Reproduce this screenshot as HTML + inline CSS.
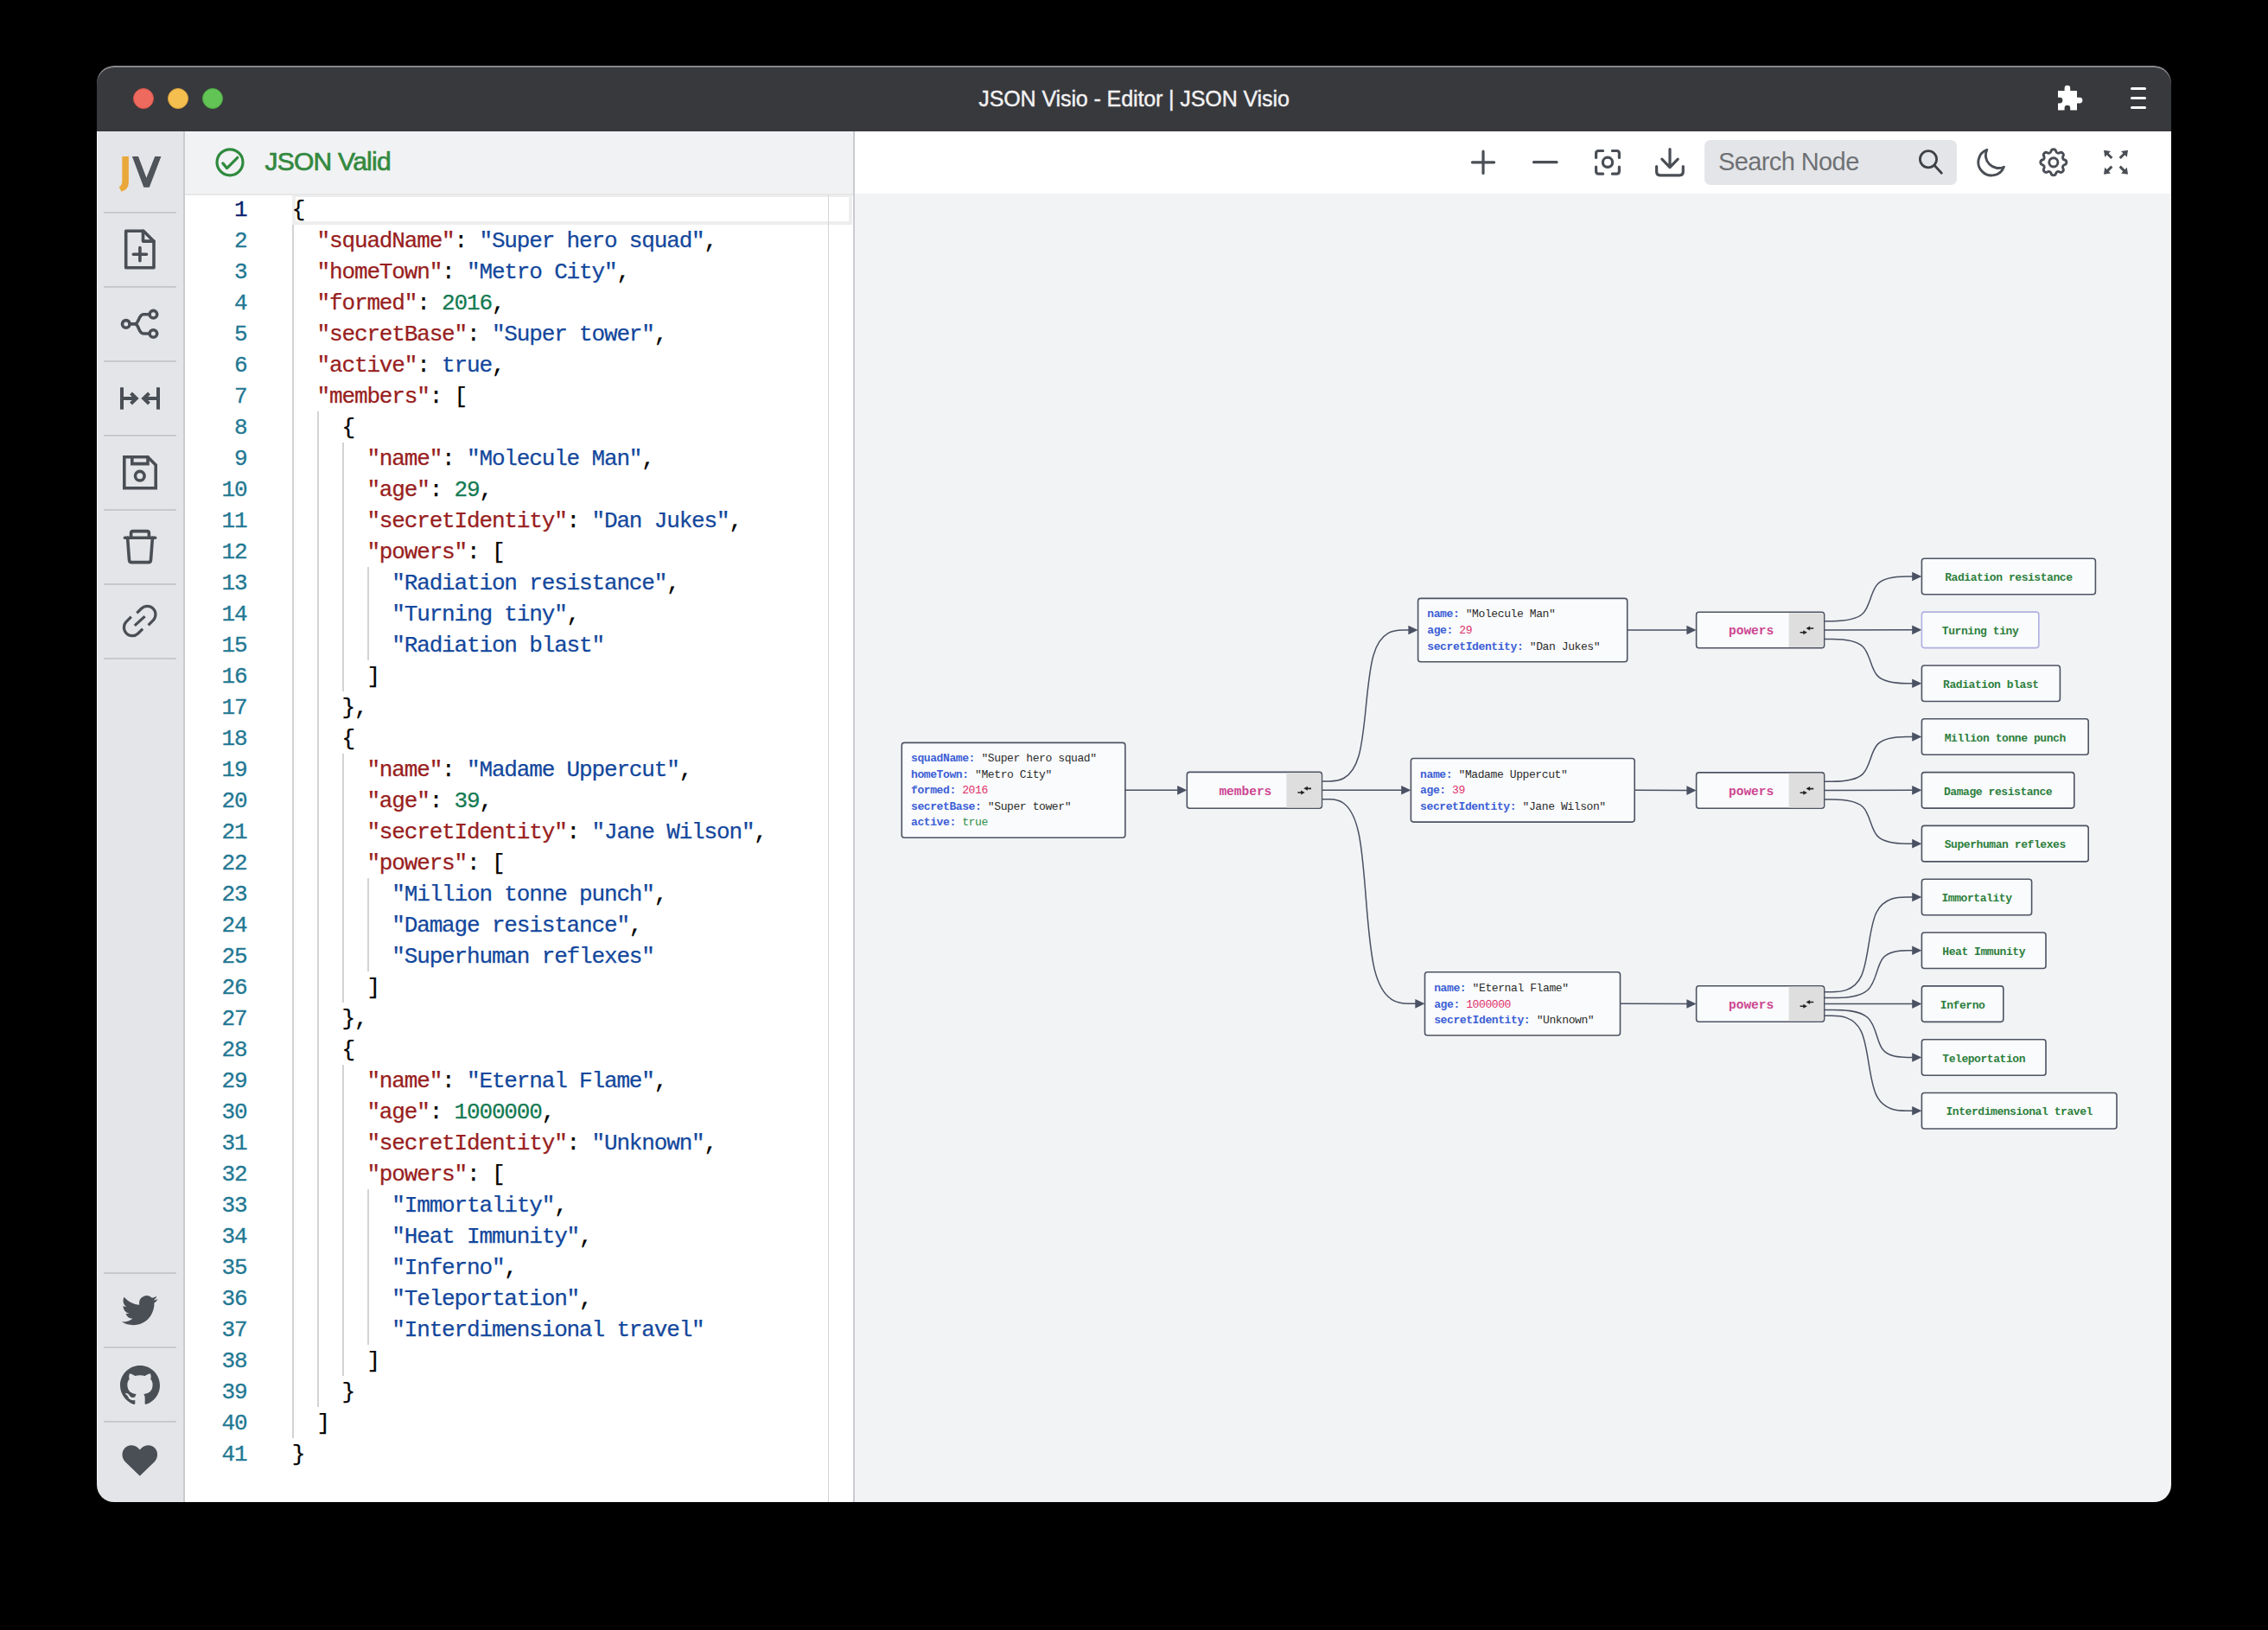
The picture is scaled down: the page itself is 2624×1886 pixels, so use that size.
<!DOCTYPE html>
<html><head><meta charset="utf-8"><title>JSON Visio - Editor | JSON Visio</title>
<style>
html,body{margin:0;padding:0}
body{width:2624px;height:1886px;background:#000;position:relative;overflow:hidden;font-family:"Liberation Sans",sans-serif}
.abs{position:absolute}
#win{position:absolute;left:0;top:0;width:2624px;height:1886px;clip-path:inset(76px 112px 148px 112px round 20px);}
.cl{position:absolute;left:0;height:36px;white-space:pre;-webkit-text-stroke:0.25px currentColor;font-family:"Liberation Mono",monospace;font-size:26px;letter-spacing:-1.153px;line-height:36px}
.ln{position:absolute;width:60px;-webkit-text-stroke:0.3px currentColor;text-align:right;font-family:"Liberation Mono",monospace;font-size:26px;letter-spacing:-1.153px;line-height:36px;color:#237893}
.k{color:#982020}.s{color:#13479c}.n{color:#137a52}.b{color:#13479c}
.g{position:absolute;width:1px;background:#d3d3d3}
.sep{position:absolute;left:120px;width:84px;height:2px;background:#c7c9cd}
.mono{font-family:"Liberation Mono",monospace}
</style></head><body>
<div id="win">

<div class="abs" style="left:112px;top:76px;width:2400px;height:76px;background:#38393d"></div>
<div class="abs" style="left:112px;top:76px;width:2400px;height:76px;border-radius:20px 20px 0 0;box-shadow:inset 0 2px 0 #88888b"></div>
<div class="abs" style="left:154px;top:102px;width:24px;height:24px;box-sizing:border-box;border-radius:50%;background:#ee6a5e;border:1px solid #d9534a"></div>
<div class="abs" style="left:194px;top:102px;width:24px;height:24px;box-sizing:border-box;border-radius:50%;background:#f5bf4f;border:1px solid #d9a23b"></div>
<div class="abs" style="left:234px;top:102px;width:24px;height:24px;box-sizing:border-box;border-radius:50%;background:#61c454;border:1px solid #4ea844"></div>
<div class="abs" style="left:1000px;top:97px;width:624px;text-align:center;font-size:25px;line-height:34px;color:#f2f2f3;-webkit-text-stroke:0.4px #f2f2f3;letter-spacing:-0.1px">JSON Visio - Editor | JSON Visio</div>
<svg class="abs" style="left:2370px;top:90px" width="50" height="50" viewBox="2370 90 50 50">
<path fill="#fff" d="M2381 105 H2388.6 V102 A3.3 3.3 0 0 1 2395.2 102 V105 H2403 V112.7 H2406 A3.4 3.4 0 0 1 2406 119.5 H2403 V127.5 H2395.2 V125 A3.3 3.3 0 0 0 2388.6 125 V127.5 H2381 V119.5 H2383 A3.4 3.4 0 0 0 2383 112.7 H2381 Z"/>
</svg>
<div class="abs" style="left:2465px;top:100.8px;width:18px;height:3.4px;border-radius:2px;background:#fff"></div>
<div class="abs" style="left:2465px;top:111.8px;width:18px;height:3.4px;border-radius:2px;background:#fff"></div>
<div class="abs" style="left:2465px;top:122.8px;width:18px;height:3.4px;border-radius:2px;background:#fff"></div>
<div class="abs" style="left:112px;top:152px;width:100px;height:1586px;background:#e4e5e8"></div>
<div class="abs" style="left:112px;top:152px;width:1px;height:1560px;background:#f3f4f6"></div>
<div class="abs" style="left:212px;top:152px;width:2px;height:1586px;background:#c9cbcf"></div>
<div class="sep" style="top:245px"></div>
<div class="sep" style="top:331px"></div>
<div class="sep" style="top:417px"></div>
<div class="sep" style="top:503px"></div>
<div class="sep" style="top:589px"></div>
<div class="sep" style="top:675px"></div>
<div class="sep" style="top:761px"></div>
<div class="sep" style="top:1472px"></div>
<div class="sep" style="top:1558px"></div>
<div class="sep" style="top:1644px"></div>
<svg class="abs" style="left:0;top:0" width="2624" height="1886" viewBox="0 0 2624 1886">
<path fill="#eaa83a" d="M141.3 181.1 H148.9 V210.5 Q148.9 219.5 140.5 221.8 L137.7 216.3 Q141.3 214.6 141.3 210 Z"/>
<path fill="#4f535a" d="M152.9 181.1 H160 L169.4 205.8 L179.2 181.1 H186.4 L172.8 216.8 H166.3 Z"/>
<g fill="none" stroke="#4a4e55" stroke-width="3.6" stroke-linejoin="round" stroke-linecap="round">
 <path d="M145.7 267.3 H166 L178 279.3 V309.7 H145.7 Z"/>
 <path d="M165.5 267.3 V279.1 H178"/>
 <path d="M154.3 294.3 H169.5 M161.9 286.6 V301.8"/>
 <circle cx="145.8" cy="374.9" r="4.3"/>
 <circle cx="177.4" cy="363.7" r="4.3"/>
 <circle cx="177.4" cy="386" r="4.3"/>
 <path d="M150.1 374.9 H156 C161 374.9 160 363.7 166 363.7 H173.1 M156 374.9 C161 374.9 160 386 166 386 H173.1"/>
 <path d="M145.8 528.8 H171 L180.2 538 V564.8 H143.8 V528.8 Z" stroke-linejoin="miter"/>
 <path d="M152.8 528.8 V536.6 H171 V528.8" stroke-linejoin="miter"/>
 <circle cx="161.8" cy="550.7" r="5.3"/>
 <path d="M144.5 622.3 H179.6"/>
 <path d="M151.6 622 V617 Q151.6 614.6 154 614.6 H170 Q172.4 614.6 172.4 617 V622"/>
 <path d="M147.6 622.3 L149.5 648 Q149.7 650.6 152.3 650.6 H171.7 Q174.3 650.6 174.5 648 L176.4 622.3"/>
</g>
<g fill="none" stroke="#4a4e55" stroke-width="4" stroke-linecap="butt" stroke-linejoin="miter">
 <path d="M141 448.3 V473.8 M183 448.3 V473.8"/>
 <path d="M143 461 H157.5 M151.5 455 L157.8 461 L151.5 467"/>
 <path d="M181 461 H166.5 M172.5 455 L166.2 461 L172.5 467"/>
</g>
<g fill="none" stroke="#4a4e55" stroke-width="3.2" stroke-linecap="butt" stroke-linejoin="round">
 <path d="M158.3 709.4 L163.7 704 A9.62 9.62 0 0 1 177.3 717.6 L171.6 723.3"/>
 <path d="M165.1 727.6 L159.7 733 A9.62 9.62 0 0 1 146.1 719.4 L151.8 713.7"/>
 <path d="M155.8 723.9 L167.6 713.1"/>
</g>
<g transform="translate(140.8 1495.2) scale(1.745)" fill="#4a4e55">
<path d="M23.953 4.57a10 10 0 01-2.825.775 4.958 4.958 0 002.163-2.723c-.951.555-2.005.959-3.127 1.184a4.92 4.92 0 00-8.384 4.482C7.69 8.095 4.067 6.13 1.64 3.162a4.822 4.822 0 00-.666 2.475c0 1.71.87 3.213 2.188 4.096a4.904 4.904 0 01-2.228-.616v.06a4.923 4.923 0 003.946 4.827 4.996 4.996 0 01-2.212.085 4.936 4.936 0 004.604 3.417 9.867 9.867 0 01-6.102 2.105c-.39 0-.779-.023-1.17-.067a13.995 13.995 0 007.557 2.209c9.053 0 13.998-7.496 13.998-13.985 0-.21 0-.42-.015-.63A9.935 9.935 0 0024 4.59z"/>
</g>
<g transform="translate(139 1579.5) scale(1.917)" fill="#4a4e55">
<path d="M12 .297c-6.63 0-12 5.373-12 12 0 5.303 3.438 9.8 8.205 11.385.6.113.82-.258.82-.577 0-.285-.01-1.04-.015-2.04-3.338.724-4.042-1.61-4.042-1.61C4.422 18.07 3.633 17.7 3.633 17.7c-1.087-.744.084-.729.084-.729 1.205.084 1.838 1.236 1.838 1.236 1.07 1.835 2.809 1.305 3.495.998.108-.776.417-1.305.76-1.605-2.665-.3-5.466-1.332-5.466-5.930 0-1.31.465-2.38 1.235-3.22-.135-.303-.54-1.523.105-3.176 0 0 1.005-.322 3.3 1.23.96-.267 1.98-.399 3-.405 1.02.006 2.04.138 3 .405 2.28-1.552 3.285-1.23 3.285-1.23.645 1.653.24 2.873.12 3.176.765.84 1.23 1.91 1.23 3.22 0 4.61-2.805 5.625-5.475 5.92.42.36.81 1.096.81 2.22 0 1.606-.015 2.896-.015 3.286 0 .315.21.69.825.57C20.565 22.092 24 17.592 24 12.297c0-6.627-5.373-12-12-12"/>
</g>
<path fill="#4a4e55" d="M161.8 1707.7 L145 1691.5 C139.5 1686 140.5 1676.8 147.5 1673.3 C153 1670.6 158.8 1673 161.8 1677.6 C164.8 1673 170.6 1670.6 176.1 1673.3 C183.1 1676.8 184.1 1686 178.6 1691.5 Z"/>
</svg>
<div class="abs" style="left:214px;top:152px;width:773px;height:72px;background:#f1f2f4"></div>
<div class="abs" style="left:214px;top:224px;width:773px;height:1514px;background:#fff"></div>
<div class="abs" style="left:987px;top:152px;width:2px;height:1586px;background:#c9cbcf"></div>
<div class="abs" style="left:989px;top:152px;width:1523px;height:72px;background:#fff"></div>
<div class="abs" style="left:989px;top:224px;width:1523px;height:1514px;background:#f2f3f5"></div>
<svg class="abs" style="left:0;top:0" width="2624" height="300" viewBox="0 0 2624 300">
<g fill="none" stroke="#2f8a3e" stroke-width="3.2" stroke-linecap="round" stroke-linejoin="round">
<circle cx="266" cy="187.8" r="15"/>
<path d="M257.8 188.9 L262.6 194.6 L274.8 182.3"/>
</g>
</svg>
<div class="abs" style="left:306.5px;top:169px;font-size:30px;letter-spacing:-0.75px;line-height:36px;color:#33893f;-webkit-text-stroke:0.7px #33893f;white-space:pre">JSON Valid</div>
<div class="abs" style="left:1972px;top:162px;width:292px;height:52px;border-radius:7px;background:#e4e5e8"></div>
<div class="abs" style="left:1988px;top:169px;font-size:29px;letter-spacing:-0.6px;line-height:36px;color:#6e7175;white-space:pre">Search Node</div>
<svg class="abs" style="left:0;top:0" width="2624" height="300" viewBox="0 0 2624 300">
<g fill="none" stroke="#4a4e55" stroke-width="3.2" stroke-linecap="round" stroke-linejoin="round">
 <path d="M1716 175.2 V200.4 M1703.4 187.8 H1728.6"/>
 <path d="M1774.5 187.7 H1801"/>
 <path d="M1846.6 182.5 V177.5 Q1846.6 174.5 1849.6 174.5 H1854.6 M1865.4 174.5 H1870.4 Q1873.4 174.5 1873.4 177.5 V182.5 M1873.4 193 V198 Q1873.4 201.2 1870.4 201.2 H1865.4 M1854.6 201.2 H1849.6 Q1846.6 201.2 1846.6 198 V193"/>
 <circle cx="1860" cy="187.8" r="5.6"/>
 <path d="M1932 172.6 V193.6 M1922.8 184.2 L1932 193.6 L1941.2 184.2"/>
 <path d="M1916.6 192.5 V198.8 Q1916.6 202.8 1920.6 202.8 H1943.3 Q1947.3 202.8 1947.3 198.8 V192.5"/>
</g>
<g fill="none" stroke="#3e4247" stroke-width="2.8" stroke-linecap="round">
 <circle cx="2231" cy="184.3" r="9.6"/>
 <path d="M2238 191.3 L2246.3 200.3"/>
</g>
<g fill="none" stroke="#4a4e55" stroke-width="2.9" stroke-linecap="round" stroke-linejoin="round">
 <path d="M2298.8 173.3 A15.3 15.3 0 1 0 2318.4 193.2 A14.9 14.9 0 0 1 2298.8 173.3 Z"/>
</g>
<g transform="translate(2355.8 167.8) scale(1.67)" fill="none" stroke="#4a4e55" stroke-width="1.75" stroke-linecap="round" stroke-linejoin="round">
 <path d="M10.325 4.317c.426 -1.756 2.924 -1.756 3.35 0a1.724 1.724 0 0 0 2.573 1.066c1.543 -.94 3.31 .826 2.37 2.37a1.724 1.724 0 0 0 1.065 2.572c1.756 .426 1.756 2.924 0 3.35a1.724 1.724 0 0 0 -1.066 2.573c.94 1.543 -.826 3.31 -2.37 2.37a1.724 1.724 0 0 0 -2.572 1.065c-.426 1.756 -2.924 1.756 -3.35 0a1.724 1.724 0 0 0 -2.573 -1.066c-1.543 .94 -3.31 -.826 -2.37 -2.37a1.724 1.724 0 0 0 -1.065 -2.572c-1.756 -.426 -1.756 -2.924 0 -3.35a1.724 1.724 0 0 0 1.066 -2.573c-.94 -1.543 .826 -3.31 2.37 -2.37c1 .608 2.296 .07 2.572 -1.065z"/>
 <circle cx="12" cy="12" r="3.05"/>
</g>
<g fill="#4a4e55" stroke="none">
 <path d="M2434 173.8 L2442 175 L2435.2 181.8 Z M2462 173.8 L2454 175 L2460.8 181.8 Z M2434 201.8 L2442 200.6 L2435.2 193.8 Z M2462 201.8 L2454 200.6 L2460.8 193.8 Z"/>
</g>
<g stroke="#4a4e55" stroke-width="3" fill="none">
 <path d="M2437.3 177 L2443.3 183 M2458.7 177 L2452.7 183 M2437.3 198.6 L2443.3 192.6 M2458.7 198.6 L2452.7 192.6"/>
</g>
</svg>
<div class="abs" style="left:958px;top:224px;width:1px;height:1514px;background:#d6d6d6;z-index:3"></div>
<div class="abs" style="left:338px;top:224px;width:640px;height:28px;border:4px solid #eeeeee;z-index:1"></div>
<div class="abs" style="left:214px;top:224px;width:773px;height:2px;background:#e6e7e9;z-index:4"></div>
<div class="ln" style="left:271.00px;top:225px;width:auto;color:#0b216f;z-index:2">1</div>
<div class="cl" style="left:337.70px;top:225px;z-index:2">{</div>
<div class="g" style="left:338.00px;top:260px;height:36px;width:2px"></div>
<div class="ln" style="left:271.00px;top:261px;width:auto;color:#237893;z-index:2">2</div>
<div class="cl" style="left:337.70px;top:261px;z-index:2">  <span class="k">&quot;squadName&quot;</span>: <span class="s">&quot;Super hero squad&quot;</span>,</div>
<div class="g" style="left:338.00px;top:296px;height:36px;width:2px"></div>
<div class="ln" style="left:271.00px;top:297px;width:auto;color:#237893;z-index:2">3</div>
<div class="cl" style="left:337.70px;top:297px;z-index:2">  <span class="k">&quot;homeTown&quot;</span>: <span class="s">&quot;Metro City&quot;</span>,</div>
<div class="g" style="left:338.00px;top:332px;height:36px;width:2px"></div>
<div class="ln" style="left:271.00px;top:333px;width:auto;color:#237893;z-index:2">4</div>
<div class="cl" style="left:337.70px;top:333px;z-index:2">  <span class="k">&quot;formed&quot;</span>: <span class="n">2016</span>,</div>
<div class="g" style="left:338.00px;top:368px;height:36px;width:2px"></div>
<div class="ln" style="left:271.00px;top:369px;width:auto;color:#237893;z-index:2">5</div>
<div class="cl" style="left:337.70px;top:369px;z-index:2">  <span class="k">&quot;secretBase&quot;</span>: <span class="s">&quot;Super tower&quot;</span>,</div>
<div class="g" style="left:338.00px;top:404px;height:36px;width:2px"></div>
<div class="ln" style="left:271.00px;top:405px;width:auto;color:#237893;z-index:2">6</div>
<div class="cl" style="left:337.70px;top:405px;z-index:2">  <span class="k">&quot;active&quot;</span>: <span class="b">true</span>,</div>
<div class="g" style="left:338.00px;top:440px;height:36px;width:2px"></div>
<div class="ln" style="left:271.00px;top:441px;width:auto;color:#237893;z-index:2">7</div>
<div class="cl" style="left:337.70px;top:441px;z-index:2">  <span class="k">&quot;members&quot;</span>: [</div>
<div class="g" style="left:338.00px;top:476px;height:36px;width:2px"></div>
<div class="g" style="left:366.90px;top:476px;height:36px;width:2px"></div>
<div class="ln" style="left:271.00px;top:477px;width:auto;color:#237893;z-index:2">8</div>
<div class="cl" style="left:337.70px;top:477px;z-index:2">    {</div>
<div class="g" style="left:338.00px;top:512px;height:36px;width:2px"></div>
<div class="g" style="left:366.90px;top:512px;height:36px;width:2px"></div>
<div class="g" style="left:395.80px;top:512px;height:36px;width:2px"></div>
<div class="ln" style="left:271.00px;top:513px;width:auto;color:#237893;z-index:2">9</div>
<div class="cl" style="left:337.70px;top:513px;z-index:2">      <span class="k">&quot;name&quot;</span>: <span class="s">&quot;Molecule Man&quot;</span>,</div>
<div class="g" style="left:338.00px;top:548px;height:36px;width:2px"></div>
<div class="g" style="left:366.90px;top:548px;height:36px;width:2px"></div>
<div class="g" style="left:395.80px;top:548px;height:36px;width:2px"></div>
<div class="ln" style="left:256.55px;top:549px;width:auto;color:#237893;z-index:2">10</div>
<div class="cl" style="left:337.70px;top:549px;z-index:2">      <span class="k">&quot;age&quot;</span>: <span class="n">29</span>,</div>
<div class="g" style="left:338.00px;top:584px;height:36px;width:2px"></div>
<div class="g" style="left:366.90px;top:584px;height:36px;width:2px"></div>
<div class="g" style="left:395.80px;top:584px;height:36px;width:2px"></div>
<div class="ln" style="left:256.55px;top:585px;width:auto;color:#237893;z-index:2">11</div>
<div class="cl" style="left:337.70px;top:585px;z-index:2">      <span class="k">&quot;secretIdentity&quot;</span>: <span class="s">&quot;Dan Jukes&quot;</span>,</div>
<div class="g" style="left:338.00px;top:620px;height:36px;width:2px"></div>
<div class="g" style="left:366.90px;top:620px;height:36px;width:2px"></div>
<div class="g" style="left:395.80px;top:620px;height:36px;width:2px"></div>
<div class="ln" style="left:256.55px;top:621px;width:auto;color:#237893;z-index:2">12</div>
<div class="cl" style="left:337.70px;top:621px;z-index:2">      <span class="k">&quot;powers&quot;</span>: [</div>
<div class="g" style="left:338.00px;top:656px;height:36px;width:2px"></div>
<div class="g" style="left:366.90px;top:656px;height:36px;width:2px"></div>
<div class="g" style="left:395.80px;top:656px;height:36px;width:2px"></div>
<div class="g" style="left:424.70px;top:656px;height:36px;width:2px"></div>
<div class="ln" style="left:256.55px;top:657px;width:auto;color:#237893;z-index:2">13</div>
<div class="cl" style="left:337.70px;top:657px;z-index:2">        <span class="s">&quot;Radiation resistance&quot;</span>,</div>
<div class="g" style="left:338.00px;top:692px;height:36px;width:2px"></div>
<div class="g" style="left:366.90px;top:692px;height:36px;width:2px"></div>
<div class="g" style="left:395.80px;top:692px;height:36px;width:2px"></div>
<div class="g" style="left:424.70px;top:692px;height:36px;width:2px"></div>
<div class="ln" style="left:256.55px;top:693px;width:auto;color:#237893;z-index:2">14</div>
<div class="cl" style="left:337.70px;top:693px;z-index:2">        <span class="s">&quot;Turning tiny&quot;</span>,</div>
<div class="g" style="left:338.00px;top:728px;height:36px;width:2px"></div>
<div class="g" style="left:366.90px;top:728px;height:36px;width:2px"></div>
<div class="g" style="left:395.80px;top:728px;height:36px;width:2px"></div>
<div class="g" style="left:424.70px;top:728px;height:36px;width:2px"></div>
<div class="ln" style="left:256.55px;top:729px;width:auto;color:#237893;z-index:2">15</div>
<div class="cl" style="left:337.70px;top:729px;z-index:2">        <span class="s">&quot;Radiation blast&quot;</span></div>
<div class="g" style="left:338.00px;top:764px;height:36px;width:2px"></div>
<div class="g" style="left:366.90px;top:764px;height:36px;width:2px"></div>
<div class="g" style="left:395.80px;top:764px;height:36px;width:2px"></div>
<div class="ln" style="left:256.55px;top:765px;width:auto;color:#237893;z-index:2">16</div>
<div class="cl" style="left:337.70px;top:765px;z-index:2">      ]</div>
<div class="g" style="left:338.00px;top:800px;height:36px;width:2px"></div>
<div class="g" style="left:366.90px;top:800px;height:36px;width:2px"></div>
<div class="ln" style="left:256.55px;top:801px;width:auto;color:#237893;z-index:2">17</div>
<div class="cl" style="left:337.70px;top:801px;z-index:2">    },</div>
<div class="g" style="left:338.00px;top:836px;height:36px;width:2px"></div>
<div class="g" style="left:366.90px;top:836px;height:36px;width:2px"></div>
<div class="ln" style="left:256.55px;top:837px;width:auto;color:#237893;z-index:2">18</div>
<div class="cl" style="left:337.70px;top:837px;z-index:2">    {</div>
<div class="g" style="left:338.00px;top:872px;height:36px;width:2px"></div>
<div class="g" style="left:366.90px;top:872px;height:36px;width:2px"></div>
<div class="g" style="left:395.80px;top:872px;height:36px;width:2px"></div>
<div class="ln" style="left:256.55px;top:873px;width:auto;color:#237893;z-index:2">19</div>
<div class="cl" style="left:337.70px;top:873px;z-index:2">      <span class="k">&quot;name&quot;</span>: <span class="s">&quot;Madame Uppercut&quot;</span>,</div>
<div class="g" style="left:338.00px;top:908px;height:36px;width:2px"></div>
<div class="g" style="left:366.90px;top:908px;height:36px;width:2px"></div>
<div class="g" style="left:395.80px;top:908px;height:36px;width:2px"></div>
<div class="ln" style="left:256.55px;top:909px;width:auto;color:#237893;z-index:2">20</div>
<div class="cl" style="left:337.70px;top:909px;z-index:2">      <span class="k">&quot;age&quot;</span>: <span class="n">39</span>,</div>
<div class="g" style="left:338.00px;top:944px;height:36px;width:2px"></div>
<div class="g" style="left:366.90px;top:944px;height:36px;width:2px"></div>
<div class="g" style="left:395.80px;top:944px;height:36px;width:2px"></div>
<div class="ln" style="left:256.55px;top:945px;width:auto;color:#237893;z-index:2">21</div>
<div class="cl" style="left:337.70px;top:945px;z-index:2">      <span class="k">&quot;secretIdentity&quot;</span>: <span class="s">&quot;Jane Wilson&quot;</span>,</div>
<div class="g" style="left:338.00px;top:980px;height:36px;width:2px"></div>
<div class="g" style="left:366.90px;top:980px;height:36px;width:2px"></div>
<div class="g" style="left:395.80px;top:980px;height:36px;width:2px"></div>
<div class="ln" style="left:256.55px;top:981px;width:auto;color:#237893;z-index:2">22</div>
<div class="cl" style="left:337.70px;top:981px;z-index:2">      <span class="k">&quot;powers&quot;</span>: [</div>
<div class="g" style="left:338.00px;top:1016px;height:36px;width:2px"></div>
<div class="g" style="left:366.90px;top:1016px;height:36px;width:2px"></div>
<div class="g" style="left:395.80px;top:1016px;height:36px;width:2px"></div>
<div class="g" style="left:424.70px;top:1016px;height:36px;width:2px"></div>
<div class="ln" style="left:256.55px;top:1017px;width:auto;color:#237893;z-index:2">23</div>
<div class="cl" style="left:337.70px;top:1017px;z-index:2">        <span class="s">&quot;Million tonne punch&quot;</span>,</div>
<div class="g" style="left:338.00px;top:1052px;height:36px;width:2px"></div>
<div class="g" style="left:366.90px;top:1052px;height:36px;width:2px"></div>
<div class="g" style="left:395.80px;top:1052px;height:36px;width:2px"></div>
<div class="g" style="left:424.70px;top:1052px;height:36px;width:2px"></div>
<div class="ln" style="left:256.55px;top:1053px;width:auto;color:#237893;z-index:2">24</div>
<div class="cl" style="left:337.70px;top:1053px;z-index:2">        <span class="s">&quot;Damage resistance&quot;</span>,</div>
<div class="g" style="left:338.00px;top:1088px;height:36px;width:2px"></div>
<div class="g" style="left:366.90px;top:1088px;height:36px;width:2px"></div>
<div class="g" style="left:395.80px;top:1088px;height:36px;width:2px"></div>
<div class="g" style="left:424.70px;top:1088px;height:36px;width:2px"></div>
<div class="ln" style="left:256.55px;top:1089px;width:auto;color:#237893;z-index:2">25</div>
<div class="cl" style="left:337.70px;top:1089px;z-index:2">        <span class="s">&quot;Superhuman reflexes&quot;</span></div>
<div class="g" style="left:338.00px;top:1124px;height:36px;width:2px"></div>
<div class="g" style="left:366.90px;top:1124px;height:36px;width:2px"></div>
<div class="g" style="left:395.80px;top:1124px;height:36px;width:2px"></div>
<div class="ln" style="left:256.55px;top:1125px;width:auto;color:#237893;z-index:2">26</div>
<div class="cl" style="left:337.70px;top:1125px;z-index:2">      ]</div>
<div class="g" style="left:338.00px;top:1160px;height:36px;width:2px"></div>
<div class="g" style="left:366.90px;top:1160px;height:36px;width:2px"></div>
<div class="ln" style="left:256.55px;top:1161px;width:auto;color:#237893;z-index:2">27</div>
<div class="cl" style="left:337.70px;top:1161px;z-index:2">    },</div>
<div class="g" style="left:338.00px;top:1196px;height:36px;width:2px"></div>
<div class="g" style="left:366.90px;top:1196px;height:36px;width:2px"></div>
<div class="ln" style="left:256.55px;top:1197px;width:auto;color:#237893;z-index:2">28</div>
<div class="cl" style="left:337.70px;top:1197px;z-index:2">    {</div>
<div class="g" style="left:338.00px;top:1232px;height:36px;width:2px"></div>
<div class="g" style="left:366.90px;top:1232px;height:36px;width:2px"></div>
<div class="g" style="left:395.80px;top:1232px;height:36px;width:2px"></div>
<div class="ln" style="left:256.55px;top:1233px;width:auto;color:#237893;z-index:2">29</div>
<div class="cl" style="left:337.70px;top:1233px;z-index:2">      <span class="k">&quot;name&quot;</span>: <span class="s">&quot;Eternal Flame&quot;</span>,</div>
<div class="g" style="left:338.00px;top:1268px;height:36px;width:2px"></div>
<div class="g" style="left:366.90px;top:1268px;height:36px;width:2px"></div>
<div class="g" style="left:395.80px;top:1268px;height:36px;width:2px"></div>
<div class="ln" style="left:256.55px;top:1269px;width:auto;color:#237893;z-index:2">30</div>
<div class="cl" style="left:337.70px;top:1269px;z-index:2">      <span class="k">&quot;age&quot;</span>: <span class="n">1000000</span>,</div>
<div class="g" style="left:338.00px;top:1304px;height:36px;width:2px"></div>
<div class="g" style="left:366.90px;top:1304px;height:36px;width:2px"></div>
<div class="g" style="left:395.80px;top:1304px;height:36px;width:2px"></div>
<div class="ln" style="left:256.55px;top:1305px;width:auto;color:#237893;z-index:2">31</div>
<div class="cl" style="left:337.70px;top:1305px;z-index:2">      <span class="k">&quot;secretIdentity&quot;</span>: <span class="s">&quot;Unknown&quot;</span>,</div>
<div class="g" style="left:338.00px;top:1340px;height:36px;width:2px"></div>
<div class="g" style="left:366.90px;top:1340px;height:36px;width:2px"></div>
<div class="g" style="left:395.80px;top:1340px;height:36px;width:2px"></div>
<div class="ln" style="left:256.55px;top:1341px;width:auto;color:#237893;z-index:2">32</div>
<div class="cl" style="left:337.70px;top:1341px;z-index:2">      <span class="k">&quot;powers&quot;</span>: [</div>
<div class="g" style="left:338.00px;top:1376px;height:36px;width:2px"></div>
<div class="g" style="left:366.90px;top:1376px;height:36px;width:2px"></div>
<div class="g" style="left:395.80px;top:1376px;height:36px;width:2px"></div>
<div class="g" style="left:424.70px;top:1376px;height:36px;width:2px"></div>
<div class="ln" style="left:256.55px;top:1377px;width:auto;color:#237893;z-index:2">33</div>
<div class="cl" style="left:337.70px;top:1377px;z-index:2">        <span class="s">&quot;Immortality&quot;</span>,</div>
<div class="g" style="left:338.00px;top:1412px;height:36px;width:2px"></div>
<div class="g" style="left:366.90px;top:1412px;height:36px;width:2px"></div>
<div class="g" style="left:395.80px;top:1412px;height:36px;width:2px"></div>
<div class="g" style="left:424.70px;top:1412px;height:36px;width:2px"></div>
<div class="ln" style="left:256.55px;top:1413px;width:auto;color:#237893;z-index:2">34</div>
<div class="cl" style="left:337.70px;top:1413px;z-index:2">        <span class="s">&quot;Heat Immunity&quot;</span>,</div>
<div class="g" style="left:338.00px;top:1448px;height:36px;width:2px"></div>
<div class="g" style="left:366.90px;top:1448px;height:36px;width:2px"></div>
<div class="g" style="left:395.80px;top:1448px;height:36px;width:2px"></div>
<div class="g" style="left:424.70px;top:1448px;height:36px;width:2px"></div>
<div class="ln" style="left:256.55px;top:1449px;width:auto;color:#237893;z-index:2">35</div>
<div class="cl" style="left:337.70px;top:1449px;z-index:2">        <span class="s">&quot;Inferno&quot;</span>,</div>
<div class="g" style="left:338.00px;top:1484px;height:36px;width:2px"></div>
<div class="g" style="left:366.90px;top:1484px;height:36px;width:2px"></div>
<div class="g" style="left:395.80px;top:1484px;height:36px;width:2px"></div>
<div class="g" style="left:424.70px;top:1484px;height:36px;width:2px"></div>
<div class="ln" style="left:256.55px;top:1485px;width:auto;color:#237893;z-index:2">36</div>
<div class="cl" style="left:337.70px;top:1485px;z-index:2">        <span class="s">&quot;Teleportation&quot;</span>,</div>
<div class="g" style="left:338.00px;top:1520px;height:36px;width:2px"></div>
<div class="g" style="left:366.90px;top:1520px;height:36px;width:2px"></div>
<div class="g" style="left:395.80px;top:1520px;height:36px;width:2px"></div>
<div class="g" style="left:424.70px;top:1520px;height:36px;width:2px"></div>
<div class="ln" style="left:256.55px;top:1521px;width:auto;color:#237893;z-index:2">37</div>
<div class="cl" style="left:337.70px;top:1521px;z-index:2">        <span class="s">&quot;Interdimensional travel&quot;</span></div>
<div class="g" style="left:338.00px;top:1556px;height:36px;width:2px"></div>
<div class="g" style="left:366.90px;top:1556px;height:36px;width:2px"></div>
<div class="g" style="left:395.80px;top:1556px;height:36px;width:2px"></div>
<div class="ln" style="left:256.55px;top:1557px;width:auto;color:#237893;z-index:2">38</div>
<div class="cl" style="left:337.70px;top:1557px;z-index:2">      ]</div>
<div class="g" style="left:338.00px;top:1592px;height:36px;width:2px"></div>
<div class="g" style="left:366.90px;top:1592px;height:36px;width:2px"></div>
<div class="ln" style="left:256.55px;top:1593px;width:auto;color:#237893;z-index:2">39</div>
<div class="cl" style="left:337.70px;top:1593px;z-index:2">    }</div>
<div class="g" style="left:338.00px;top:1628px;height:36px;width:2px"></div>
<div class="ln" style="left:256.55px;top:1629px;width:auto;color:#237893;z-index:2">40</div>
<div class="cl" style="left:337.70px;top:1629px;z-index:2">  ]</div>
<div class="ln" style="left:256.55px;top:1665px;width:auto;color:#237893;z-index:2">41</div>
<div class="cl" style="left:337.70px;top:1665px;z-index:2">}</div>
<svg class="abs" style="left:0;top:0" width="2624" height="1886" viewBox="0 0 2624 1886">
<path d="M1301.80 914.30 L1364.30 914.35" fill="none" stroke="#4a5162" stroke-width="1.5"/><path d="M1373.30 914.35 L1362.10 909.05 L1362.10 919.65 Z" fill="#4a5162"/>
<path d="M1529.40 903.88 L1537.92 903.88 C1546.43 903.88 1563.47 903.88 1571.98 874.74 C1580.50 845.60 1580.50 787.32 1589.02 758.19 C1597.53 729.05 1614.57 729.05 1623.08 729.05 L1631.60 729.05" fill="none" stroke="#4a5162" stroke-width="1.5"/><path d="M1640.60 729.05 L1629.40 723.75 L1629.40 734.35 Z" fill="#4a5162"/>
<path d="M1529.40 914.35 L1623.40 914.30" fill="none" stroke="#4a5162" stroke-width="1.5"/><path d="M1632.40 914.30 L1621.20 909.00 L1621.20 919.60 Z" fill="#4a5162"/>
<path d="M1529.40 924.82 L1537.92 924.82 C1546.43 924.82 1563.47 924.82 1571.98 964.25 C1580.50 1003.67 1580.50 1082.51 1590.33 1121.93 C1600.17 1161.35 1619.83 1161.35 1629.67 1161.35 L1639.50 1161.35" fill="none" stroke="#4a5162" stroke-width="1.5"/><path d="M1648.50 1161.35 L1637.30 1156.05 L1637.30 1166.65 Z" fill="#4a5162"/>
<path d="M1882.70 729.05 L1953.60 729.05" fill="none" stroke="#4a5162" stroke-width="1.5"/><path d="M1962.60 729.05 L1951.40 723.75 L1951.40 734.35 Z" fill="#4a5162"/>
<path d="M1891.20 914.30 L1953.60 914.60" fill="none" stroke="#4a5162" stroke-width="1.5"/><path d="M1962.60 914.60 L1951.40 909.30 L1951.40 919.90 Z" fill="#4a5162"/>
<path d="M1874.50 1161.35 L1953.60 1161.50" fill="none" stroke="#4a5162" stroke-width="1.5"/><path d="M1962.60 1161.50 L1951.40 1156.20 L1951.40 1166.80 Z" fill="#4a5162"/>
<path d="M2110.60 718.67 L2119.50 718.68 C2128.40 718.67 2146.20 718.67 2155.10 710.07 C2164.00 701.47 2164.00 684.26 2172.40 675.65 C2180.80 667.05 2197.60 667.05 2206.00 667.05 L2214.40 667.05" fill="none" stroke="#4a5162" stroke-width="1.5"/><path d="M2223.40 667.05 L2212.20 661.75 L2212.20 672.35 Z" fill="#4a5162"/>
<path d="M2110.60 729.05 L2214.40 728.87" fill="none" stroke="#4a5162" stroke-width="1.5"/><path d="M2223.40 728.87 L2212.20 723.57 L2212.20 734.17 Z" fill="#4a5162"/>
<path d="M2110.60 739.42 L2119.50 739.43 C2128.40 739.42 2146.20 739.42 2155.10 747.97 C2164.00 756.51 2164.00 773.60 2172.40 782.15 C2180.80 790.69 2197.60 790.69 2206.00 790.69 L2214.40 790.69" fill="none" stroke="#4a5162" stroke-width="1.5"/><path d="M2223.40 790.69 L2212.20 785.39 L2212.20 795.99 Z" fill="#4a5162"/>
<path d="M2110.60 904.25 L2119.50 904.25 C2128.40 904.25 2146.20 904.25 2155.10 895.63 C2164.00 887.00 2164.00 869.76 2172.40 861.13 C2180.80 852.51 2197.60 852.51 2206.00 852.51 L2214.40 852.51" fill="none" stroke="#4a5162" stroke-width="1.5"/><path d="M2223.40 852.51 L2212.20 847.21 L2212.20 857.81 Z" fill="#4a5162"/>
<path d="M2110.60 914.60 L2214.40 914.33" fill="none" stroke="#4a5162" stroke-width="1.5"/><path d="M2223.40 914.33 L2212.20 909.03 L2212.20 919.63 Z" fill="#4a5162"/>
<path d="M2110.60 924.95 L2119.50 924.95 C2128.40 924.95 2146.20 924.95 2155.10 933.48 C2164.00 942.02 2164.00 959.08 2172.40 967.62 C2180.80 976.15 2197.60 976.15 2206.00 976.15 L2214.40 976.15" fill="none" stroke="#4a5162" stroke-width="1.5"/><path d="M2223.40 976.15 L2212.20 970.85 L2212.20 981.45 Z" fill="#4a5162"/>
<path d="M2110.60 1147.70 L2119.17 1147.70 C2127.73 1147.70 2144.87 1147.70 2153.43 1129.41 C2162.00 1111.12 2162.00 1074.55 2170.73 1056.26 C2179.47 1037.97 2196.93 1037.97 2205.67 1037.97 L2214.40 1037.97" fill="none" stroke="#4a5162" stroke-width="1.5"/><path d="M2223.40 1037.97 L2212.20 1032.67 L2212.20 1043.27 Z" fill="#4a5162"/>
<path d="M2110.60 1154.60 L2120.67 1154.60 C2130.73 1154.60 2150.87 1154.60 2160.93 1145.46 C2171.00 1136.33 2171.00 1118.06 2178.23 1108.92 C2185.47 1099.79 2199.93 1099.79 2207.17 1099.79 L2214.40 1099.79" fill="none" stroke="#4a5162" stroke-width="1.5"/><path d="M2223.40 1099.79 L2212.20 1094.49 L2212.20 1105.09 Z" fill="#4a5162"/>
<path d="M2110.60 1161.50 L2214.40 1161.61" fill="none" stroke="#4a5162" stroke-width="1.5"/><path d="M2223.40 1161.61 L2212.20 1156.31 L2212.20 1166.91 Z" fill="#4a5162"/>
<path d="M2110.60 1168.40 L2120.67 1168.40 C2130.73 1168.40 2150.87 1168.40 2160.93 1177.57 C2171.00 1186.74 2171.00 1205.09 2178.23 1214.26 C2185.47 1223.43 2199.93 1223.43 2207.17 1223.43 L2214.40 1223.43" fill="none" stroke="#4a5162" stroke-width="1.5"/><path d="M2223.40 1223.43 L2212.20 1218.13 L2212.20 1228.73 Z" fill="#4a5162"/>
<path d="M2110.60 1175.30 L2119.17 1175.30 C2127.73 1175.30 2144.87 1175.30 2153.43 1193.62 C2162.00 1211.95 2162.00 1248.60 2170.73 1266.92 C2179.47 1285.25 2196.93 1285.25 2205.67 1285.25 L2214.40 1285.25" fill="none" stroke="#4a5162" stroke-width="1.5"/><path d="M2223.40 1285.25 L2212.20 1279.95 L2212.20 1290.55 Z" fill="#4a5162"/>
<rect x="1043.30" y="859.40" width="258.50" height="109.80" rx="3" ry="3" fill="#fafbfc" stroke="#4d5362" stroke-width="1.6"/>
<rect x="1373.30" y="893.40" width="156.10" height="41.90" rx="3" ry="3" fill="#fafbfc" stroke="#4d5362" stroke-width="1.6"/>
<rect x="1640.60" y="692.40" width="242.10" height="73.30" rx="3" ry="3" fill="#fafbfc" stroke="#4d5362" stroke-width="1.6"/>
<rect x="1632.40" y="877.50" width="258.80" height="73.60" rx="3" ry="3" fill="#fafbfc" stroke="#4d5362" stroke-width="1.6"/>
<rect x="1648.50" y="1124.70" width="226.00" height="73.30" rx="3" ry="3" fill="#fafbfc" stroke="#4d5362" stroke-width="1.6"/>
<rect x="1962.60" y="708.30" width="148.00" height="41.50" rx="3" ry="3" fill="#fafbfc" stroke="#4d5362" stroke-width="1.6"/>
<rect x="1962.60" y="893.90" width="148.00" height="41.40" rx="3" ry="3" fill="#fafbfc" stroke="#4d5362" stroke-width="1.6"/>
<rect x="1962.60" y="1140.80" width="148.00" height="41.40" rx="3" ry="3" fill="#fafbfc" stroke="#4d5362" stroke-width="1.6"/>
<rect x="2223.40" y="646.30" width="201.00" height="41.50" rx="3" ry="3" fill="#fafbfc" stroke="#4d5362" stroke-width="1.6"/>
<rect x="2223.40" y="708.12" width="135.40" height="41.50" rx="3" ry="3" fill="#fafbfc" stroke="#b0b0e0" stroke-width="1.6"/>
<rect x="2223.40" y="769.94" width="160.00" height="41.50" rx="3" ry="3" fill="#fafbfc" stroke="#4d5362" stroke-width="1.6"/>
<rect x="2223.40" y="831.76" width="192.80" height="41.50" rx="3" ry="3" fill="#fafbfc" stroke="#4d5362" stroke-width="1.6"/>
<rect x="2223.40" y="893.58" width="176.40" height="41.50" rx="3" ry="3" fill="#fafbfc" stroke="#4d5362" stroke-width="1.6"/>
<rect x="2223.40" y="955.40" width="192.80" height="41.50" rx="3" ry="3" fill="#fafbfc" stroke="#4d5362" stroke-width="1.6"/>
<rect x="2223.40" y="1017.22" width="127.20" height="41.50" rx="3" ry="3" fill="#fafbfc" stroke="#4d5362" stroke-width="1.6"/>
<rect x="2223.40" y="1079.04" width="143.60" height="41.50" rx="3" ry="3" fill="#fafbfc" stroke="#4d5362" stroke-width="1.6"/>
<rect x="2223.40" y="1140.86" width="94.40" height="41.50" rx="3" ry="3" fill="#fafbfc" stroke="#4d5362" stroke-width="1.6"/>
<rect x="2223.40" y="1202.68" width="143.60" height="41.50" rx="3" ry="3" fill="#fafbfc" stroke="#4d5362" stroke-width="1.6"/>
<rect x="2223.40" y="1264.50" width="225.60" height="41.50" rx="3" ry="3" fill="#fafbfc" stroke="#4d5362" stroke-width="1.6"/>
<path d="M1488.40 894.25 H1526.40 Q1528.55 894.25 1528.55 896.40 V932.30 Q1528.55 934.45 1526.40 934.45 H1488.40 Z" fill="#dedede" stroke="none"/><g stroke="#222" stroke-width="1.6" fill="none"><path d="M1501.40 917.05 H1505.90 M1517.00 912.35 H1512.20"/></g><path d="M1509.70 917.05 L1505.10 914.55 L1505.10 919.55 Z M1508.30 912.35 L1512.90 909.85 L1512.90 914.85 Z" fill="#222"/>
<path d="M2069.60 709.15 H2107.60 Q2109.75 709.15 2109.75 711.30 V746.80 Q2109.75 748.95 2107.60 748.95 H2069.60 Z" fill="#dedede" stroke="none"/><g stroke="#222" stroke-width="1.6" fill="none"><path d="M2082.60 731.75 H2087.10 M2098.20 727.05 H2093.40"/></g><path d="M2090.90 731.75 L2086.30 729.25 L2086.30 734.25 Z M2089.50 727.05 L2094.10 724.55 L2094.10 729.55 Z" fill="#222"/>
<path d="M2069.60 894.75 H2107.60 Q2109.75 894.75 2109.75 896.90 V932.30 Q2109.75 934.45 2107.60 934.45 H2069.60 Z" fill="#dedede" stroke="none"/><g stroke="#222" stroke-width="1.6" fill="none"><path d="M2082.60 917.30 H2087.10 M2098.20 912.60 H2093.40"/></g><path d="M2090.90 917.30 L2086.30 914.80 L2086.30 919.80 Z M2089.50 912.60 L2094.10 910.10 L2094.10 915.10 Z" fill="#222"/>
<path d="M2069.60 1141.65 H2107.60 Q2109.75 1141.65 2109.75 1143.80 V1179.20 Q2109.75 1181.35 2107.60 1181.35 H2069.60 Z" fill="#dedede" stroke="none"/><g stroke="#222" stroke-width="1.6" fill="none"><path d="M2082.60 1164.20 H2087.10 M2098.20 1159.50 H2093.40"/></g><path d="M2090.90 1164.20 L2086.30 1161.70 L2086.30 1166.70 Z M2089.50 1159.50 L2094.10 1157.00 L2094.10 1162.00 Z" fill="#222"/>
</svg>
<div class="abs mono" style="left:1054.00px;top:869.20px;font-size:13px;letter-spacing:-0.4px;line-height:18px;white-space:pre;z-index:5"><span style="color:#3c5fd6;font-weight:bold">squadName:</span> <span style="color:#2b2b2b">&quot;Super hero squad&quot;</span></div><div class="abs mono" style="left:1054.00px;top:887.67px;font-size:13px;letter-spacing:-0.4px;line-height:18px;white-space:pre;z-index:5"><span style="color:#3c5fd6;font-weight:bold">homeTown:</span> <span style="color:#2b2b2b">&quot;Metro City&quot;</span></div><div class="abs mono" style="left:1054.00px;top:906.14px;font-size:13px;letter-spacing:-0.4px;line-height:18px;white-space:pre;z-index:5"><span style="color:#3c5fd6;font-weight:bold">formed:</span> <span style="color:#e0306a">2016</span></div><div class="abs mono" style="left:1054.00px;top:924.61px;font-size:13px;letter-spacing:-0.4px;line-height:18px;white-space:pre;z-index:5"><span style="color:#3c5fd6;font-weight:bold">secretBase:</span> <span style="color:#2b2b2b">&quot;Super tower&quot;</span></div><div class="abs mono" style="left:1054.00px;top:943.08px;font-size:13px;letter-spacing:-0.4px;line-height:18px;white-space:pre;z-index:5"><span style="color:#3c5fd6;font-weight:bold">active:</span> <span style="color:#2f8f46">true</span></div>
<div class="abs mono" style="left:1651.30px;top:701.90px;font-size:13px;letter-spacing:-0.4px;line-height:18px;white-space:pre;z-index:5"><span style="color:#3c5fd6;font-weight:bold">name:</span> <span style="color:#2b2b2b">&quot;Molecule Man&quot;</span></div><div class="abs mono" style="left:1651.30px;top:720.80px;font-size:13px;letter-spacing:-0.4px;line-height:18px;white-space:pre;z-index:5"><span style="color:#3c5fd6;font-weight:bold">age:</span> <span style="color:#e0306a">29</span></div><div class="abs mono" style="left:1651.30px;top:739.70px;font-size:13px;letter-spacing:-0.4px;line-height:18px;white-space:pre;z-index:5"><span style="color:#3c5fd6;font-weight:bold">secretIdentity:</span> <span style="color:#2b2b2b">&quot;Dan Jukes&quot;</span></div>
<div class="abs mono" style="left:1643.10px;top:887.50px;font-size:13px;letter-spacing:-0.4px;line-height:18px;white-space:pre;z-index:5"><span style="color:#3c5fd6;font-weight:bold">name:</span> <span style="color:#2b2b2b">&quot;Madame Uppercut&quot;</span></div><div class="abs mono" style="left:1643.10px;top:906.20px;font-size:13px;letter-spacing:-0.4px;line-height:18px;white-space:pre;z-index:5"><span style="color:#3c5fd6;font-weight:bold">age:</span> <span style="color:#e0306a">39</span></div><div class="abs mono" style="left:1643.10px;top:924.90px;font-size:13px;letter-spacing:-0.4px;line-height:18px;white-space:pre;z-index:5"><span style="color:#3c5fd6;font-weight:bold">secretIdentity:</span> <span style="color:#2b2b2b">&quot;Jane Wilson&quot;</span></div>
<div class="abs mono" style="left:1659.20px;top:1134.80px;font-size:13px;letter-spacing:-0.4px;line-height:18px;white-space:pre;z-index:5"><span style="color:#3c5fd6;font-weight:bold">name:</span> <span style="color:#2b2b2b">&quot;Eternal Flame&quot;</span></div><div class="abs mono" style="left:1659.20px;top:1153.50px;font-size:13px;letter-spacing:-0.4px;line-height:18px;white-space:pre;z-index:5"><span style="color:#3c5fd6;font-weight:bold">age:</span> <span style="color:#e0306a">1000000</span></div><div class="abs mono" style="left:1659.20px;top:1172.20px;font-size:13px;letter-spacing:-0.4px;line-height:18px;white-space:pre;z-index:5"><span style="color:#3c5fd6;font-weight:bold">secretIdentity:</span> <span style="color:#2b2b2b">&quot;Unknown&quot;</span></div>
<div class="abs mono" style="left:1383.30px;top:905.55px;width:115.10px;text-align:center;font-size:14.5px;letter-spacing:0px;line-height:20px;white-space:pre;color:#cc4590;font-weight:bold;z-index:5">members</div>
<div class="abs mono" style="left:1972.60px;top:720.25px;width:107.00px;text-align:center;font-size:14.5px;letter-spacing:0px;line-height:20px;white-space:pre;color:#cc4590;font-weight:bold;z-index:5">powers</div>
<div class="abs mono" style="left:1972.60px;top:905.80px;width:107.00px;text-align:center;font-size:14.5px;letter-spacing:0px;line-height:20px;white-space:pre;color:#cc4590;font-weight:bold;z-index:5">powers</div>
<div class="abs mono" style="left:1972.60px;top:1152.70px;width:107.00px;text-align:center;font-size:14.5px;letter-spacing:0px;line-height:20px;white-space:pre;color:#cc4590;font-weight:bold;z-index:5">powers</div>
<div class="abs mono" style="left:2223.40px;top:659.25px;width:201.00px;text-align:center;font-size:13px;letter-spacing:-0.43px;line-height:20px;white-space:pre;color:#2d7f3d;font-weight:bold;z-index:5">Radiation resistance</div>
<div class="abs mono" style="left:2223.40px;top:721.07px;width:135.40px;text-align:center;font-size:13px;letter-spacing:-0.43px;line-height:20px;white-space:pre;color:#2d7f3d;font-weight:bold;z-index:5">Turning tiny</div>
<div class="abs mono" style="left:2223.40px;top:782.89px;width:160.00px;text-align:center;font-size:13px;letter-spacing:-0.43px;line-height:20px;white-space:pre;color:#2d7f3d;font-weight:bold;z-index:5">Radiation blast</div>
<div class="abs mono" style="left:2223.40px;top:844.71px;width:192.80px;text-align:center;font-size:13px;letter-spacing:-0.43px;line-height:20px;white-space:pre;color:#2d7f3d;font-weight:bold;z-index:5">Million tonne punch</div>
<div class="abs mono" style="left:2223.40px;top:906.53px;width:176.40px;text-align:center;font-size:13px;letter-spacing:-0.43px;line-height:20px;white-space:pre;color:#2d7f3d;font-weight:bold;z-index:5">Damage resistance</div>
<div class="abs mono" style="left:2223.40px;top:968.35px;width:192.80px;text-align:center;font-size:13px;letter-spacing:-0.43px;line-height:20px;white-space:pre;color:#2d7f3d;font-weight:bold;z-index:5">Superhuman reflexes</div>
<div class="abs mono" style="left:2223.40px;top:1030.17px;width:127.20px;text-align:center;font-size:13px;letter-spacing:-0.43px;line-height:20px;white-space:pre;color:#2d7f3d;font-weight:bold;z-index:5">Immortality</div>
<div class="abs mono" style="left:2223.40px;top:1091.99px;width:143.60px;text-align:center;font-size:13px;letter-spacing:-0.43px;line-height:20px;white-space:pre;color:#2d7f3d;font-weight:bold;z-index:5">Heat Immunity</div>
<div class="abs mono" style="left:2223.40px;top:1153.81px;width:94.40px;text-align:center;font-size:13px;letter-spacing:-0.43px;line-height:20px;white-space:pre;color:#2d7f3d;font-weight:bold;z-index:5">Inferno</div>
<div class="abs mono" style="left:2223.40px;top:1215.63px;width:143.60px;text-align:center;font-size:13px;letter-spacing:-0.43px;line-height:20px;white-space:pre;color:#2d7f3d;font-weight:bold;z-index:5">Teleportation</div>
<div class="abs mono" style="left:2223.40px;top:1277.45px;width:225.60px;text-align:center;font-size:13px;letter-spacing:-0.43px;line-height:20px;white-space:pre;color:#2d7f3d;font-weight:bold;z-index:5">Interdimensional travel</div>
</div></body></html>
